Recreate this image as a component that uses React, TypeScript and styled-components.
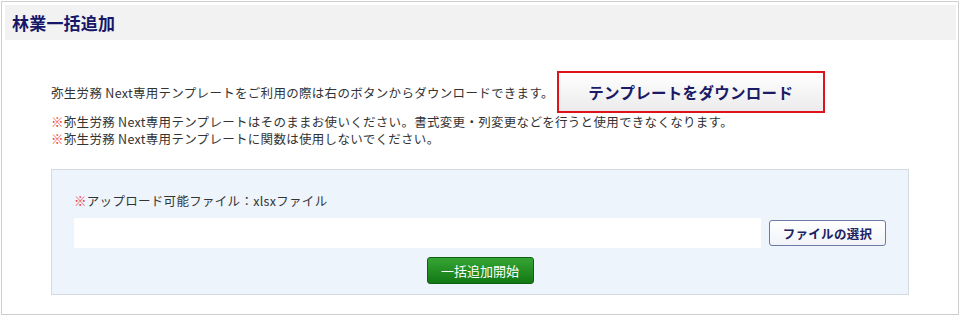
import React from "react";
import styled, { createGlobalStyle } from "styled-components";

const Global = createGlobalStyle`
  html, body { margin: 0; padding: 0; background: #fff; }
  body { font-family: "Noto Sans CJK JP", "Noto Sans", sans-serif; color: #333; }
`;

const Frame = styled.div`
  margin: 1px 0 0 1px;
  width: 958px;
  height: 314px;
  box-sizing: border-box;
  border: 1px solid #cfcfcf;
  padding: 3px 2px 0 2px;
  display: flex;
  flex-direction: column;
`;

const Header = styled.div`
  height: 35px;
  margin-left: 1px;
  background: #f2f2f2;
  display: flex;
  align-items: center;
  padding-left: 7px;
`;

const Title = styled.h1`
  margin: 0;
  font-size: 17px;
  font-weight: 700;
  color: #17176a;
  letter-spacing: 0.2px;
`;

const Body = styled.div`
  padding: 31px 47px 0 47px;
  display: flex;
  flex-direction: column;
`;

const DownloadRow = styled.div`
  display: flex;
  align-items: center;
  gap: 3px;
`;

const Text = styled.p`
  margin: 0;
  font-size: 12.5px;
  line-height: 17px;
  letter-spacing: 0.3px;
  color: #333;
  white-space: nowrap;
`;

const Mark = styled.span`
  color: #f03c3c;
`;

const DownloadButton = styled.button`
  width: 268px;
  height: 42px;
  box-sizing: border-box;
  border: 2px solid #e0121c;
  background: linear-gradient(#ffffff, #ebebeb);
  font-family: inherit;
  font-size: 15.5px;
  font-weight: 700;
  letter-spacing: 0.3px;
  color: #1a1a66;
  padding: 0;
  cursor: pointer;
`;

const Notes = styled.div`
  margin-top: 0;
`;

const Panel = styled.div`
  margin-top: 22px;
  width: 858px;
  height: 126px;
  box-sizing: border-box;
  background: #edf4fb;
  border: 1px solid #d3dae2;
  padding: 22px 22px 0 22px;
  display: flex;
  flex-direction: column;
`;

const FileRow = styled.div`
  margin-top: 9px;
  display: flex;
  align-items: center;
  gap: 8px;
`;

const FileInput = styled.div`
  flex: 1;
  height: 30px;
  background: #fff;
`;

const SelectButton = styled.button`
  width: 117px;
  height: 26px;
  box-sizing: border-box;
  border: 1px solid #6d7aa6;
  border-radius: 3px;
  background: linear-gradient(#ffffff, #f1f3f8);
  font-family: inherit;
  font-size: 12.5px;
  font-weight: 700;
  letter-spacing: 0.3px;
  color: #1c2262;
  padding: 0;
`;

const Actions = styled.div`
  margin-top: 9px;
  display: flex;
  justify-content: center;
`;

const StartButton = styled.button`
  width: 107px;
  height: 27px;
  box-sizing: border-box;
  border: 1px solid #0f610f;
  border-radius: 3px;
  background: linear-gradient(#35a535, #137813);
  font-family: inherit;
  font-size: 13px;
  color: #fff;
  padding: 0;
`;

export default function App() {
  return (
    <>
      <Global />
      <Frame>
        <Header>
          <Title>林業一括追加</Title>
        </Header>
        <Body>
          <DownloadRow>
            <Text>弥生労務 Next専用テンプレートをご利用の際は右のボタンからダウンロードできます。</Text>
            <DownloadButton>テンプレートをダウンロード</DownloadButton>
          </DownloadRow>
          <Notes>
            <Text>
              <Mark>※</Mark>弥生労務 Next専用テンプレートはそのままお使いください。書式変更・列変更などを行うと使用できなくなります。
            </Text>
            <Text>
              <Mark>※</Mark>弥生労務 Next専用テンプレートに関数は使用しないでください。
            </Text>
          </Notes>
          <Panel>
            <Text>
              <Mark>※</Mark>アップロード可能ファイル：xlsxファイル
            </Text>
            <FileRow>
              <FileInput />
              <SelectButton>ファイルの選択</SelectButton>
            </FileRow>
            <Actions>
              <StartButton>一括追加開始</StartButton>
            </Actions>
          </Panel>
        </Body>
      </Frame>
    </>
  );
}
